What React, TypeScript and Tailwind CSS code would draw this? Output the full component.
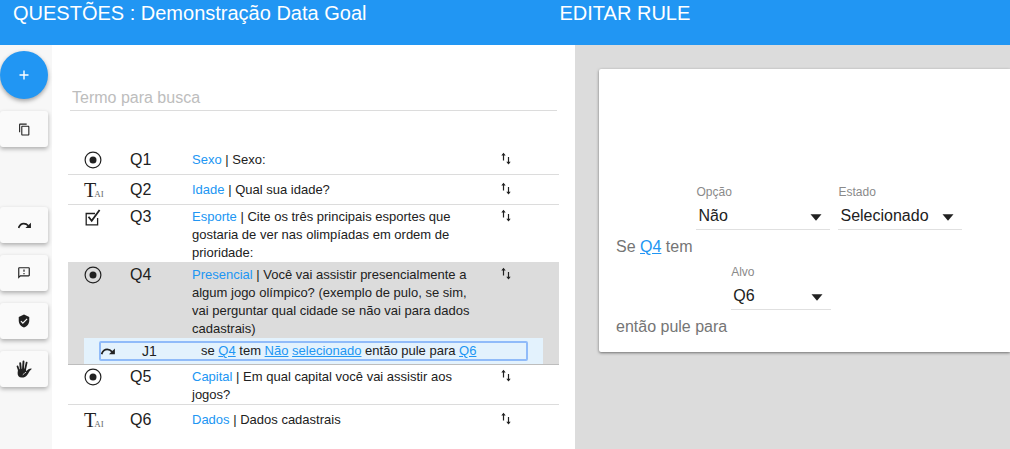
import React, { useState } from 'react';
import { MdContentCopy, MdOutlineFeedback, MdVerifiedUser } from 'react-icons/md';

type QuestionKind = 'single' | 'text' | 'multiple';

interface Question {
    id: string;
    kind: QuestionKind;
    topic: string;
    title: string;
    selected?: boolean;
}

const QUESTIONS: Question[] = [
    { id: 'Q1', kind: 'single', topic: 'Sexo', title: 'Sexo:' },
    { id: 'Q2', kind: 'text', topic: 'Idade', title: 'Qual sua idade?' },
    { id: 'Q3', kind: 'multiple', topic: 'Esporte', title: 'Cite os três principais esportes que gostaria de ver nas olimpíadas em ordem de prioridade:' },
    { id: 'Q4', kind: 'single', topic: 'Presencial', title: 'Você vai assistir presencialmente a algum jogo olímpico? (exemplo de pulo, se sim, vai perguntar qual cidade se não vai para dados cadastrais)', selected: true },
    { id: 'Q5', kind: 'single', topic: 'Capital', title: 'Em qual capital você vai assistir aos jogos?' },
    { id: 'Q6', kind: 'text', topic: 'Dados', title: 'Dados cadastrais' },
];

const SHORT_ROWS = ['Q1', 'Q2', 'Q6'];

const JumpIcon: React.FC<{ className?: string }> = ({ className }) => (
    <svg viewBox="0 0 14 7" className={className} aria-hidden="true">
        <path d="M0.6 6.2C1.6 3.2 3.6 1.4 6.2 1.400c2 0 3.400.7 5 2.400" fill="none" stroke="currentColor" strokeWidth="1.800" />
        <path d="M13.900 0.600V6.200H8z" fill="currentColor" />
    </svg>
);

const HandIcon: React.FC = () => (
    <svg viewBox="0 0 16 18" className="w-4 h-[18px]" aria-hidden="true">
        <g stroke="currentColor" strokeLinecap="round" fill="none">
            <path d="M3.300 11.500L1.500 6.400" strokeWidth="1.700" />
            <path d="M4.900 10.500L4.200 3.200" strokeWidth="1.900" />
            <path d="M6.900 10.500L7.500 1.500" strokeWidth="1.900" />
            <path d="M8.900 10.500L10.600 2.600" strokeWidth="1.800" />
        </g>
        <path d="M2 9.500L9.900 8.600L10.200 11.200C11.600 9.800 13.400 8.400 15.300 8.500C15.900 8.700 15.700 9.300 15 9.700C13.200 10.800 12.700 13.200 11 15.200C9.800 16.700 8.200 17.600 5.800 17.600C2.800 17.600 1.500 15.600 1.600 13z" fill="currentColor" />
        <path d="M6.800 14.900C7.900 14.500 7.900 12.800 10.100 12.300" fill="none" stroke="#fafafa" strokeWidth=".8" />
    </svg>
);

const SortIcon: React.FC = () => (
    <svg viewBox="0 0 10 13" className="w-[10px] h-[13px]" aria-hidden="true">
        <path d="M2.500 8.500V2M7.500 5V11.500" fill="none" stroke="currentColor" strokeWidth="1.200" />
        <path d="M0.300 3.600L2.500 0.800 4.700 3.600zM5.300 9.700L7.500 12.500 9.700 9.700z" fill="currentColor" />
    </svg>
);

const KindIcon: React.FC<{ kind: QuestionKind }> = ({ kind }) => {
    if (kind === 'text') {
        return (
            <span className="flex items-end h-[18px] font-['Liberation_Serif',serif] text-xl leading-[18px]">
                T<span className="-ml-0.5 text-[9px] leading-[9px] text-[#6b6b6b]">AI</span>
            </span>
        );
    }
    if (kind === 'multiple') {
        return (
            <svg viewBox="0 0 18 18" className="w-[18px] h-[18px]" aria-hidden="true">
                <path d="M11 5.500H2.200V16.800H13.600V10" fill="none" stroke="currentColor" strokeWidth="1.300" />
                <path d="M4.500 8.800L7.700 12.800 15.600 2" fill="none" stroke="currentColor" strokeWidth="1.800" />
            </svg>
        );
    }
    return (
        <svg viewBox="0 0 18 18" className="w-[18px] h-[18px]" aria-hidden="true">
            <circle cx="9" cy="9" r="7.900" fill="none" stroke="currentColor" strokeWidth="1.200" />
            <circle cx="9" cy="9" r="3.500" fill="currentColor" />
        </svg>
    );
};

const ToolButton: React.FC<{ label: string; children: React.ReactNode }> = ({ label, children }) => (
    <button aria-label={label} className="flex items-center justify-center w-12 h-9 rounded-[3px] bg-[#fafafa] shadow-[0_2px_4px_rgba(0,0,0,0.3)]">
        {children}
    </button>
);

const JumpRule: React.FC = () => (
    <div className="mx-4 px-[15px] py-[3px] bg-[#e3f2fd]">
        <div className="flex items-center h-5 rounded-xs border-2 border-[#90bbf9] text-[13px]">
            <JumpIcon className="w-[14px] h-[7px]" />
            <span className="ml-[27px] w-[59px] text-sm">J1</span>
            <span>
                se <a href="#q4" className="text-[#2196f3] underline">Q4</a> tem{' '}
                <a href="#nao" className="text-[#2196f3] underline">Não</a>{' '}
                <a href="#selecionado" className="text-[#2196f3] underline">selecionado</a> então pule para{' '}
                <a href="#q6" className="text-[#2196f3] underline">Q6</a>
            </span>
        </div>
    </div>
);

const QuestionRow: React.FC<{ question: Question }> = ({ question }) => (
    <li className={`border-b last:border-b-0 ${question.selected ? 'bg-[#dcdcdc] border-[#bdbdbd]' : 'border-[#dcdcdc]'}`}>
        <div className={`flex items-start pl-4 ${SHORT_ROWS.includes(question.id) ? 'pt-1.5 pb-[5px]' : 'pt-[3px]'}`}>
            <div className="w-[46px] shrink-0"><KindIcon kind={question.kind} /></div>
            <div className="w-[62px] shrink-0 text-base leading-[18px]">{question.id}</div>
            <div className="flex-1 text-[13px] leading-[18px]">
                <span className="text-[#2196f3]">{question.topic}</span> | {question.title}
            </div>
            <button aria-label={`Mover ${question.id}`} className="ml-5 mr-12 pt-px shrink-0"><SortIcon /></button>
        </div>
        {question.selected && <JumpRule />}
    </li>
);

interface SelectFieldProps {
    id: string;
    label: string;
    options: string[];
    className: string;
}

const SelectField: React.FC<SelectFieldProps> = ({ id, label, options, className }) => {
    const [value, setValue] = useState(options[0]);

    return (
        <div className={`mb-[26px] ${className}`}>
            <label htmlFor={id} className="block text-xs leading-4 text-[#8a8a8a]">{label}</label>
            <div className="relative">
                <select
                    id={id}
                    value={value}
                    onChange={e => setValue(e.target.value)}
                    className="block w-full h-[30px] px-0.5 pt-0.5 appearance-none border-b border-[#e0e0e0] bg-transparent text-base text-[#212121] outline-none"
                >
                    {options.map(o => <option key={o}>{o}</option>)}
                </select>
                <svg viewBox="0 0 12 7" className="absolute right-2 top-3.5 w-3 h-[7px] pointer-events-none" aria-hidden="true">
                    <path d="M0.500 0.300h11L6 6.800z" fill="#212121" />
                </svg>
            </div>
        </div>
    );
};

const App: React.FC = () => {
    const [search, setSearch] = useState('');

    return (
        <div className="min-h-screen flex flex-col bg-white text-[#212121] font-['Liberation_Sans',Arial,sans-serif]">
            <header className="flex h-[45px] bg-[#2196f3] text-white text-xl leading-[26px]">
                <h1 className="w-[55.4%] pl-[13px] shrink-0">QUESTÕES : Demonstração Data Goal</h1>
                <h2>EDITAR RULE</h2>
            </header>

            <div className="flex flex-1">
                <nav className="flex flex-col gap-3 w-[52px] shrink-0 pt-1.5 bg-[#f7f7f7]">
                    <button aria-label="Adicionar" className="flex items-center justify-center w-12 h-12 rounded-full bg-[#2196f3] text-white shadow-[0_2px_4px_rgba(0,0,0,0.35)]">
                        <svg viewBox="0 0 10 10" className="w-[10px] h-[10px]" aria-hidden="true">
                            <path d="M5 0.500v9M0.500 5h9" stroke="currentColor" strokeWidth="1.400" />
                        </svg>
                    </button>
                    <ToolButton label="Copiar"><MdContentCopy size={13} /></ToolButton>
                    <div className="h-9" />
                    <ToolButton label="Pulo"><JumpIcon className="w-[13px] h-[7px]" /></ToolButton>
                    <ToolButton label="Aviso"><MdOutlineFeedback size={14} /></ToolButton>
                    <ToolButton label="Validação"><MdVerifiedUser size={14} /></ToolButton>
                    <ToolButton label="Parar"><HandIcon /></ToolButton>
                </nav>

                <main className="w-[523px] shrink-0 px-4">
                    <input
                        type="text"
                        aria-label="Termo para busca"
                        placeholder="Termo para busca"
                        value={search}
                        onChange={e => setSearch(e.target.value)}
                        className="block mx-0.5 mt-10 w-[calc(100%-4px)] h-[26px] px-0.5 border-b border-[#dcdcdc] text-base placeholder:text-[#bdbdbd] outline-none"
                    />
                    <ul className="mt-[34px]">
                        {QUESTIONS.map(q => <QuestionRow key={q.id} question={q} />)}
                    </ul>
                </main>

                <section className="flex-1 pt-6 pl-6 bg-[#dcdcdc] overflow-hidden">
                    <div className="pt-[115px] pb-4 pl-[17px] rounded-l-xs bg-white text-[#757575] shadow-[0_1px_3px_rgba(0,0,0,0.5)]">
                        <div className="flex items-end gap-2 leading-[18px]">
                            <p className="-mr-1">Se <a href="#q4" className="text-[#2196f3] underline">Q4</a> tem</p>
                            <SelectField id="opcao" label="Opção" options={['Não', 'Sim']} className="w-[134px]" />
                            <SelectField id="estado" label="Estado" options={['Selecionado', 'Não selecionado']} className="w-[124px]" />
                        </div>
                        <div className="flex items-end gap-1 mt-2 leading-[18px]">
                            <p>então pule para</p>
                            <SelectField id="alvo" label="Alvo" options={['Q6', 'Q5']} className="w-[100px]" />
                        </div>
                    </div>
                </section>
            </div>
        </div>
    );
};

export default App;
